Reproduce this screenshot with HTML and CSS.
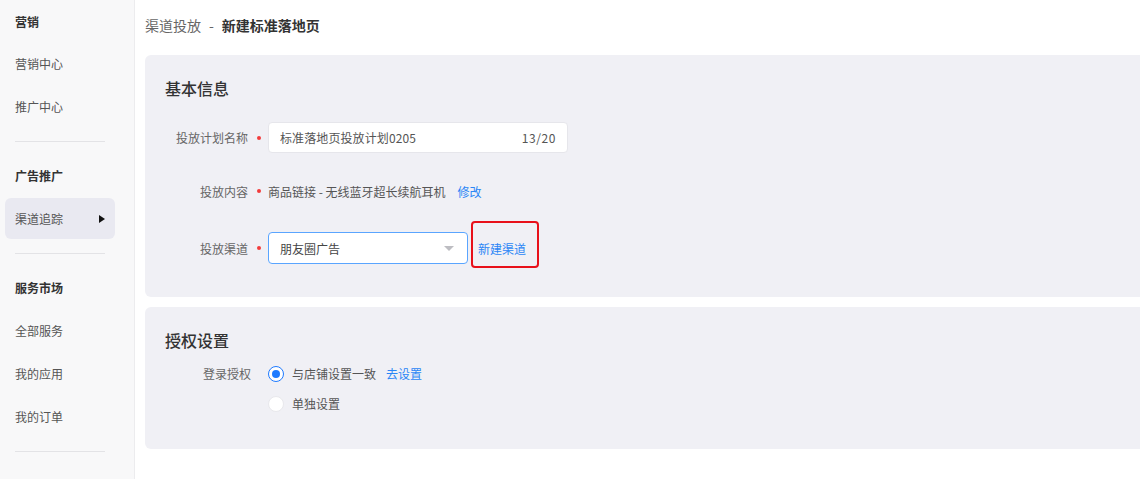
FILE: index.html
```html
<!DOCTYPE html>
<html lang="zh-CN">
<head>
<meta charset="utf-8">
<title>新建标准落地页</title>
<link rel="stylesheet" href="styles.css">
</head>
<body>
<div class="app">
  <aside class="sidebar">
    <nav class="nav">
      <div class="nav-group">
        <div class="nav-row nav-head">营销</div>
        <div class="nav-row">营销中心</div>
        <div class="nav-row">推广中心</div>
      </div>
      <div class="nav-divider"></div>
      <div class="nav-group">
        <div class="nav-row nav-head">广告推广</div>
        <div class="nav-row nav-active"><span>渠道追踪</span><span class="caret"></span></div>
      </div>
      <div class="nav-divider"></div>
      <div class="nav-group">
        <div class="nav-row nav-head">服务市场</div>
        <div class="nav-row">全部服务</div>
        <div class="nav-row">我的应用</div>
        <div class="nav-row">我的订单</div>
      </div>
      <div class="nav-divider"></div>
    </nav>
  </aside>
  <main class="main">
    <div class="crumb"><span class="crumb-parent">渠道投放</span><span class="crumb-sep">-</span><span class="crumb-cur">新建标准落地页</span></div>

    <section class="panel panel-basic">
      <h2 class="panel-title">基本信息</h2>
      <div class="form-row row-name">
        <div class="label">投放计划名称</div>
        <div class="req"><i></i></div>
        <div class="input">
          <span class="input-text">标准落地页投放计划0205</span>
          <span class="input-count">13/20</span>
        </div>
      </div>
      <div class="form-row row-content">
        <div class="label">投放内容</div>
        <div class="req"><i></i></div>
        <span class="value">商品链接 - 无线蓝牙超长续航耳机</span>
        <a class="link link-edit">修改</a>
      </div>
      <div class="form-row row-channel">
        <div class="label">投放渠道</div>
        <div class="req"><i></i></div>
        <div class="select">
          <span class="select-text">朋友圈广告</span>
          <span class="select-arrow"></span>
        </div>
        <a class="link link-new">新建渠道</a>
      </div>
    </section>

    <section class="panel panel-auth">
      <h2 class="panel-title">授权设置</h2>
      <div class="auth-row">
        <div class="label label-auth">登录授权</div>
        <div class="radios">
          <div class="radio-line">
            <span class="radio radio-on"></span>
            <span class="radio-text">与店铺设置一致</span>
            <a class="link link-set">去设置</a>
          </div>
          <div class="radio-line">
            <span class="radio"></span>
            <span class="radio-text">单独设置</span>
          </div>
        </div>
      </div>
    </section>
  </main>
</div>
</body>
</html>
```

FILE: styles.css
```css
* { box-sizing: border-box; }
html, body {
  margin: 0;
  padding: 0;
  height: 100%;
  background: #ffffff;
  font-family: "Noto Sans CJK SC", "Noto Sans", "Liberation Sans", sans-serif;
  color: #333;
}
.app {
  display: flex;
  height: 100vh;
  overflow: hidden;
}

/* sidebar */
.sidebar {
  width: 135px;
  flex: none;
  background: #f8f8f9;
  border-right: 1px solid #ececee;
}
.nav {
  width: 120px;
  padding-top: 1px;
  display: flex;
  flex-direction: column;
}
.nav-group {
  display: flex;
  flex-direction: column;
}
.nav-row {
  height: 43px;
  display: flex;
  align-items: center;
  justify-content: space-between;
  padding: 0 11px 0 15px;
  font-size: 12px;
  color: #555;
}
.nav-group:first-child .nav-head {
  height: 41px;
}
.nav-head {
  font-weight: 700;
  color: #333;
}
.nav-active {
  height: 41px;
  margin: 1px 5px;
  padding-left: 10px;
  padding-right: 10px;
  background: #e9e9f1;
  border-radius: 6px;
}
.caret {
  width: 0;
  height: 0;
  border-top: 4px solid transparent;
  border-bottom: 4px solid transparent;
  border-left: 6px solid #111;
}
.nav-divider {
  height: 1px;
  margin: 13px 15px 12px;
  background: #e3e3e6;
}

/* main */
.main {
  flex: 1;
  min-width: 0;
  padding: 15px 0 0 10px;
}
.crumb {
  height: 20px;
  line-height: 20px;
  font-size: 14px;
  display: flex;
  align-items: center;
}
.crumb-parent { color: #666; }
.crumb-sep { color: #666; margin: 0 8px; }
.crumb-cur { color: #333; font-weight: 700; }

.panel {
  background: #f0f0f5;
  border-radius: 6px 0 0 6px;
  padding: 21px 0 0 20px;
}
.panel-basic {
  margin-top: 20px;
  height: 242px;
}
.panel-auth {
  margin-top: 10px;
  height: 142px;
}
.panel-title {
  margin: 0;
  height: 24px;
  line-height: 24px;
  font-size: 16px;
  font-weight: 500;
  color: #333;
}

.form-row {
  display: flex;
  align-items: center;
  height: 32px;
  font-size: 12px;
}
.row-name { margin-top: 22px; height: 31px; }
.row-content { margin-top: 22px; }
.row-channel { margin-top: 25px; }

.label {
  width: 83px;
  text-align: right;
  color: #666;
  font-size: 12px;
}
.req {
  width: 20px;
  display: flex;
  justify-content: center;
}
.req i {
  width: 4px;
  height: 4px;
  border-radius: 50%;
  background: #f23b3b;
  margin-left: 1px;
}

.input {
  width: 300px;
  height: 31px;
  background: #fff;
  border: 1px solid #e6e6eb;
  border-radius: 4px;
  display: flex;
  align-items: center;
  justify-content: space-between;
  padding: 0 11px;
  color: #555;
}
.input-text { letter-spacing: 0.1px; }
.input-count { color: #555; letter-spacing: 0.6px; }

.value { color: #555; }
.link {
  color: #2b86f5;
  cursor: pointer;
}
.link-edit { margin-left: 12px; }

.select {
  width: 200px;
  height: 32px;
  background: #fff;
  border: 1px solid #5aa5ff;
  border-radius: 4px;
  display: flex;
  align-items: center;
  justify-content: space-between;
  padding: 0 13px 0 11px;
  color: #444;
}
.select-arrow {
  width: 0;
  height: 0;
  border-left: 5px solid transparent;
  border-right: 5px solid transparent;
  border-top: 5px solid #bdbdc2;
}
.link-new {
  position: relative;
  margin-left: 10px;
}
.link-new::after {
  content: "";
  position: absolute;
  left: -7px;
  right: -13px;
  top: -19px;
  bottom: -11px;
  border: 2px solid #e8101a;
  border-radius: 4px;
}

.auth-row {
  display: flex;
  margin-top: 14px;
  font-size: 12px;
}
.label-auth {
  width: 86px;
  line-height: 16px;
  height: 16px;
}
.radios {
  margin-left: 17px;
  display: flex;
  flex-direction: column;
  gap: 14px;
}
.radio-line {
  display: flex;
  align-items: center;
  height: 16px;
  line-height: 16px;
  color: #555;
}
.radio {
  width: 16px;
  height: 16px;
  border-radius: 50%;
  background: #fff;
  border: 1px solid #e8e8ec;
  margin-right: 8px;
  flex: none;
  display: flex;
  align-items: center;
  justify-content: center;
}
.radio-on {
  border: 1.5px solid #1f7bff;
}
.radio-on::after {
  content: "";
  width: 8px;
  height: 8px;
  border-radius: 50%;
  background: #1f7bff;
}
.link-set { margin-left: 10px; }
```
